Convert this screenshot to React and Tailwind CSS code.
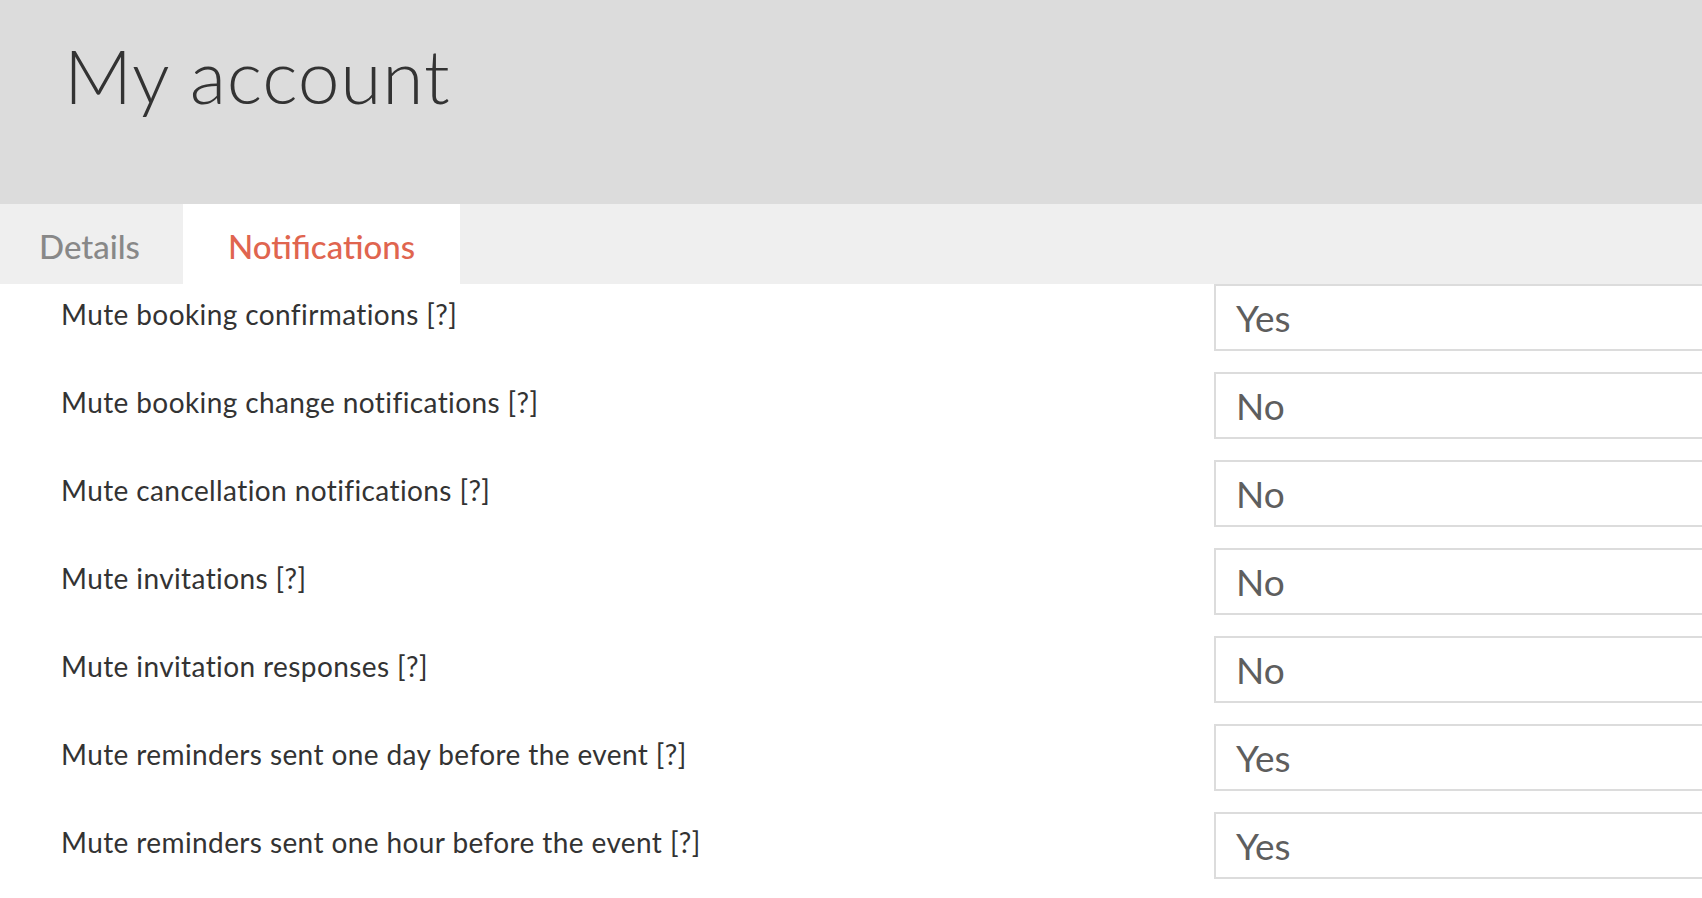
import React, { useState } from 'react';

const rows = [
  { label: 'Mute booking confirmations [?]', value: 'Yes' },
  { label: 'Mute booking change notifications [?]', value: 'No' },
  { label: 'Mute cancellation notifications [?]', value: 'No' },
  { label: 'Mute invitations [?]', value: 'No' },
  { label: 'Mute invitation responses [?]', value: 'No' },
  { label: 'Mute reminders sent one day before the event [?]', value: 'Yes' },
  { label: 'Mute reminders sent one hour before the event [?]', value: 'Yes' },
];

export default function App() {
  const [tab, setTab] = useState('notifications');

  return (
    <div className="w-full h-[898px] bg-white overflow-hidden font-['Lato',sans-serif]">
      {/* Header */}
      <div className="h-[204px] bg-[#dcdcdc] pl-[64px] pt-[38px]">
        <h1 className="text-[75px] font-light text-[#333] leading-none tracking-[0.8px]">My account</h1>
      </div>

      {/* Tabs */}
      <div className="h-[80px] bg-[#efefef] flex">
        <button
          onClick={() => setTab('details')}
          className={`w-[183px] h-full flex items-center justify-center pt-[6px] pr-[4px] text-[33px] font-medium ${tab === 'details' ? 'bg-white text-[#e0654f]' : 'text-[#888]'}`}
        >
          Details
        </button>
        <button
          onClick={() => setTab('notifications')}
          className={`w-[277px] h-full flex items-center justify-center pt-[6px] text-[33px] font-medium ${tab === 'notifications' ? 'bg-white text-[#e0654f]' : 'text-[#888]'}`}
        >
          Notifications
        </button>
      </div>

      {/* Settings */}
      <div className="flex flex-col gap-[21px]">
        {rows.map((row) => (
          <div key={row.label} className="flex items-start">
            <div className="w-[1214px] shrink-0 pl-[61px] pt-[14px] text-[28px] tracking-[0.4px] text-[#333] leading-[32px]">
              {row.label}
            </div>
            <div className="w-[600px] shrink-0 h-[67px] border-2 border-[#dcdcdc] flex items-center pl-[20px] text-[37px] text-[#5e5e5e]">
              {row.value}
            </div>
          </div>
        ))}
      </div>
    </div>
  );
}
